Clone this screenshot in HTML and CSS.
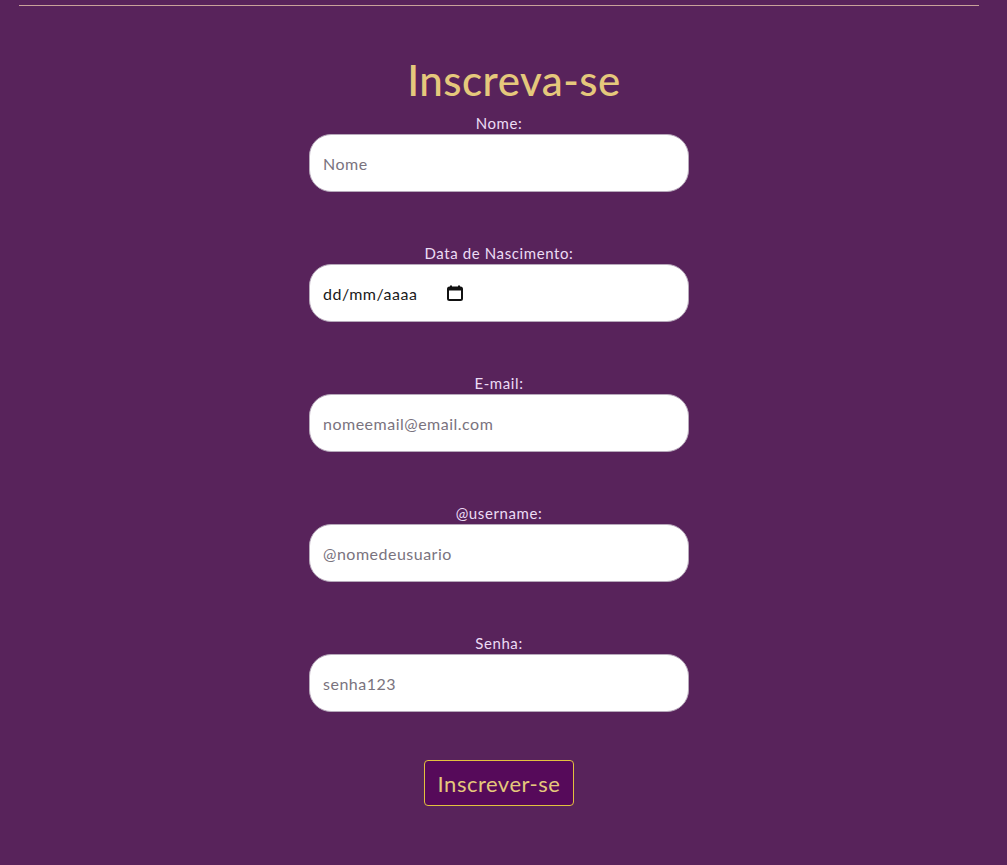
FILE: index.html
```html
<!DOCTYPE html>
<html lang="pt-BR">
<head>
<meta charset="utf-8">
<title>Inscreva-se</title>
<link rel="stylesheet" href="styles.css">
</head>
<body>
<header class="topo">
  <hr class="linha">
</header>
<main class="conteudo">
  <h1 class="titulo">Inscreva-se</h1>
  <form class="formulario">
    <div class="campo">
      <label class="rotulo" for="nome">Nome:</label>
      <input class="entrada" id="nome" type="text" placeholder="Nome">
    </div>
    <div class="campo">
      <label class="rotulo" for="nasc">Data de Nascimento:</label>
      <div class="data">
        <input class="entrada entrada-data" id="nasc" type="text" placeholder="dd/mm/aaaa">
        <svg class="calendario" width="16" height="16" viewBox="0 0 16 16" aria-hidden="true">
          <rect x="3" y="0.5" width="2" height="3" fill="#111"/>
          <rect x="11" y="0.5" width="2" height="3" fill="#111"/>
          <rect x="1" y="2.5" width="14" height="12.5" rx="1.5" fill="none" stroke="#111" stroke-width="2"/>
          <rect x="1" y="2.5" width="14" height="3" fill="#111"/>
        </svg>
      </div>
    </div>
    <div class="campo">
      <label class="rotulo" for="email">E-mail:</label>
      <input class="entrada" id="email" type="email" placeholder="nomeemail@email.com">
    </div>
    <div class="campo">
      <label class="rotulo" for="user">@username:</label>
      <input class="entrada" id="user" type="text" placeholder="@nomedeusuario">
    </div>
    <div class="campo">
      <label class="rotulo" for="senha">Senha:</label>
      <input class="entrada" id="senha" type="text" placeholder="senha123">
    </div>
    <button class="botao" type="button">Inscrever-se</button>
  </form>
</main>
</body>
</html>
```
FILE: styles.css
```css
html, body {
  margin: 0;
  padding: 0;
}
body {
  background: #58235b;
  font-family: "Lato", "Noto Sans", sans-serif;
  min-height: 865px;
}
.topo {
  padding-top: 5px;
}
.linha {
  margin: 0 0 0 19px;
  width: 960px;
  border: 0;
  height: 1px;
  background: #c9a29a;
}
.conteudo {
  display: flex;
  flex-direction: column;
  align-items: center;
  padding-right: 9px;
}
.titulo {
  margin: 50px 0 0 30px;
  font-size: 42px;
  line-height: 48px;
  font-weight: 500;
  letter-spacing: 0.5px;
  color: #e5c87c;
}
.formulario {
  display: flex;
  flex-direction: column;
  align-items: center;
  gap: 52px;
  margin-top: 10px;
}
.campo {
  display: flex;
  flex-direction: column;
  align-items: center;
  gap: 2px;
}
.rotulo {
  font-size: 15px;
  line-height: 18px;
  letter-spacing: 0.6px;
  color: #ecdcf5;
}
.entrada {
  display: block;
  box-sizing: border-box;
  width: 380px;
  height: 58px;
  border: 1px solid #b7a9bb;
  border-radius: 22px;
  background: #fff;
  padding: 0 13px;
  font-family: "Lato", "Noto Sans", sans-serif;
  font-size: 16px;
  letter-spacing: 0.5px;
  color: #111;
}
.entrada::placeholder {
  color: #7a737e;
}
.data {
  position: relative;
}
.entrada-data::placeholder {
  color: #1a1a1a;
}
.calendario {
  position: absolute;
  left: 138px;
  top: 21px;
  pointer-events: none;
}
.botao {
  margin-top: -4px;
  width: 150px;
  height: 46px;
  background: #560a5a;
  border: 1px solid #e2c13f;
  border-radius: 4px;
  color: #e5c87c;
  font-family: "Lato", "Noto Sans", sans-serif;
  font-size: 22px;
  letter-spacing: 0.5px;
  padding: 0;
}
```
